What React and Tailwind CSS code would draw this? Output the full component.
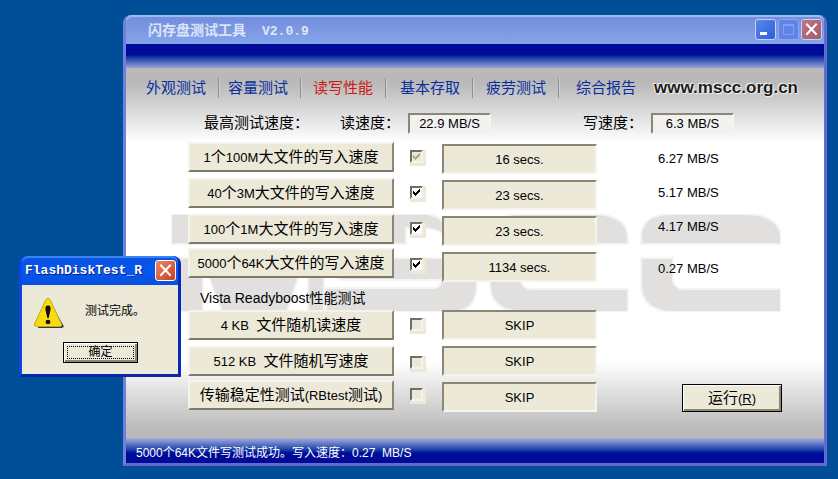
import React from "react";

const SANS = "font-['Liberation_Sans','Noto_Sans_CJK_SC',sans-serif]";
const MONO = "font-['Liberation_Mono','Noto_Sans_CJK_SC',monospace]";
const SUNKEN =
  "border-2 border-t-[#8a8777] border-l-[#8a8777] border-r-[#f6f4ea] border-b-[#f6f4ea]";
const RAISED =
  "border-2 border-t-[#f6f4ea] border-l-[#f6f4ea] border-r-[#8a8777] border-b-[#7d7a6c]";

const TABS = ["外观测试", "容量测试", "读写性能", "基本存取", "疲劳测试", "综合报告"];

const WRITE_TESTS = [
  { label: "1个100M大文件的写入速度", result: "16 secs.", checked: true, disabled: true },
  { label: "40个3M大文件的写入速度", result: "23 secs.", checked: true },
  { label: "100个1M大文件的写入速度", result: "23 secs.", checked: true },
  { label: "5000个64K大文件的写入速度", result: "1134 secs.", checked: true },
];

const BOOST_TESTS = [
  { label: "4 KB  文件随机读速度", result: "SKIP", checked: false },
  { label: "512 KB  文件随机写速度", result: "SKIP", checked: false },
  { label: "传输稳定性测试(RBtest测试)", result: "SKIP", checked: false },
];

const SPEEDS = ["6.27 MB/S", "5.17 MB/S", "4.17 MB/S", "0.27 MB/S"];

// Latin runs are set smaller than the Chinese text around them.
function Mixed({ text }) {
  return text.split(/([\x20-\x7e]+)/).map((part, i) =>
    /^[\x20-\x7e]+$/.test(part) ? (
      <span key={i} className="text-[13px]">{part}</span>
    ) : (
      part
    )
  );
}

function TestButton({ label }) {
  return (
    <button
      type="button"
      className={`h-[30px] w-full whitespace-pre bg-[#ece9d8] text-[15px] leading-[24px] text-black ${RAISED}`}
    >
      <Mixed text={label} />
    </button>
  );
}

function Check({ test }) {
  return (
    <label className="relative block size-4 bg-[#ece9d8]">
      <input
        type="checkbox"
        aria-label={test.label}
        defaultChecked={test.checked}
        disabled={test.disabled}
        className={`peer block size-[13px] appearance-none border-2 border-t-[#716f64] border-l-[#716f64] border-r-[#f6f4ea] border-b-[#f6f4ea] ${
          test.checked && !test.disabled ? "bg-white" : "bg-[#ece9d8]"
        }`}
      />
      <svg
        viewBox="0 0 7 7"
        shapeRendering="crispEdges"
        className={`pointer-events-none absolute left-[3px] top-[3px] hidden size-[7px] peer-checked:block ${
          test.disabled ? "fill-[#aca899]" : "fill-black"
        }`}
      >
        <path d="M0 2h1v1h1v1h1v-1h1v-1h1v-1h1v-1h1v3h-1v1h-1v1h-1v1h-1v1h-1v-1h-1v-1h-1z" />
      </svg>
    </label>
  );
}

function Result({ test }) {
  return (
    <input
      readOnly
      aria-label={`${test.label} 结果`}
      defaultValue={test.result}
      className={`block h-[30px] w-full bg-[#ece9d8] text-center text-[13px] text-black ${SUNKEN}`}
    />
  );
}

function Speed({ label, value }) {
  return (
    <label className="flex items-center">
      <span className="w-[68px] whitespace-nowrap text-[15px]">{label}</span>
      <input
        readOnly
        defaultValue={value}
        className={`h-[21px] w-[83px] bg-[#f1f1f0] text-center text-[13px] ${SUNKEN}`}
      />
    </label>
  );
}

function Watermark() {
  return (
    <svg
      viewBox="0 0 610 98"
      className="absolute left-[45px] top-[146px] h-[98px] w-[610px] fill-[#e1e0df] stroke-[#f4f4f4] stroke-2"
    >
      <path d="M0 0H90Q115 0 122 12L124 0H150L152 14Q156 0 185 0H255Q274 2 275 17V23Q270 15 250 14H235V30H0Z" />
      <path d="M0 44H32V98H0Z M34 44L38 64L51 98H116L127 64L132 44Z M137 44H153V98H137Z" />
      <path d="M155 44H284Q306 46 306 70Q306 98 280 98H155V74H260Q270 75 270 66H170Q155 62 155 44Z" />
      <path d="M319 30V20Q322 0 350 0H425Q457 2 457 24V30Z" />
      <path d="M319 44H350V66Q351 75 361 75H457V98H350Q319 96 319 70Z" />
      <path d="M470 30V20Q473 0 500 0H578Q609 2 610 24V30Z" />
      <path d="M470 44H502V66Q503 75 513 75H610V98H500Q470 96 470 70Z" />
    </svg>
  );
}

function CloseIcon() {
  return (
    <svg viewBox="0 0 19 19" className="size-full fill-none stroke-white stroke-2">
      <path d="M5 4.500 14 14M14 4.500 5 14" strokeLinecap="square" />
    </svg>
  );
}

function WindowControls() {
  const base = "size-[21px] rounded-[3px] border border-[#c4d2f5]";
  return (
    <div className="flex gap-[2px]">
      <button type="button" aria-label="最小化" className={`${base} bg-linear-to-br from-[#5a85ea] to-[#2f5fdc]`}>
        <svg viewBox="0 0 19 19" className="size-full fill-white">
          <path d="M4 12h7v3h-7z" />
        </svg>
      </button>
      <button type="button" disabled aria-label="最大化" className="size-[21px] rounded-[3px] border border-[#8ea6ea] bg-[#5f83e6]">
        <svg viewBox="0 0 19 19" className="size-full fill-none stroke-[#86a1ef]">
          <path d="M4.500 4.500h10v10h-10zM4 5.500h11" />
        </svg>
      </button>
      <button type="button" aria-label="关闭" className={`${base} bg-linear-to-br from-[#bd7482] to-[#a85a69]`}>
        <CloseIcon />
      </button>
    </div>
  );
}

function MainWindow() {
  return (
    <main className="absolute left-[123px] right-[11px] top-[15px] rounded-t-lg border-x-[3px] border-b-[3px] border-[#6f80dc] border-r-[#6468cf] border-b-[#6468cf] bg-[#7b96df]">
      <header className="flex h-[29px] items-center justify-between rounded-t-md bg-linear-to-b from-[#6e8be0] from-0% via-[#7994de] via-35% to-[#85a5ea] pl-[22px] pr-[2px] shadow-[inset_0_2px_1px_#a3bdf2]">
        <h1 className={`flex gap-4 whitespace-nowrap pt-1 text-[14px] font-bold text-[#dbe5fa] ${MONO}`}>
          <span>闪存盘测试工具</span>
          <span className="text-[13px] leading-[21px]">V2.0.9</span>
        </h1>
        <WindowControls />
      </header>
      <div className="h-6 bg-linear-to-b from-[#000c98] from-45% to-[#9a9fd6]" />

      <div className="relative bg-linear-to-b from-[#b9b9b9] from-4% via-white via-20% to-white to-80%">
        <div className="absolute inset-x-0 bottom-0 h-[76px] bg-linear-to-b from-white to-[#b9b9b9] to-90%" />
        <Watermark />
        <div className="relative">
          <nav className="flex h-10 items-center justify-between pl-[20px] pr-[26px]">
            <ul className="grid grid-cols-[82px_85px_87px_86px_90px_60px]">
              {TABS.map((tab, i) => (
                <li key={tab} className="flex items-center gap-3">
                  <a
                    href="#"
                    aria-current={tab === "读写性能" ? "page" : undefined}
                    className={`whitespace-nowrap text-[15px] ${tab === "读写性能" ? "text-[#d01a10]" : "text-[#0a2d9c]"}`}
                  >
                    {tab}
                  </a>
                  {i < TABS.length - 1 && (
                    <span className="h-5 w-[2px] border-l border-[#8f8f8f] bg-[#d0d0d0]" />
                  )}
                </li>
              ))}
            </ul>
            <a
              href="#"
              className="text-[17px] font-bold text-[#1c1c1c] [text-shadow:0_0_2px_#fff,1px_1px_1px_#eee,-1px_-1px_1px_#eee]"
            >
              www.mscc.org.cn
            </a>
          </nav>

          <div className="flex h-[30px] items-center pl-[78px]">
            <span className="w-[136px] whitespace-nowrap text-[15px]">最高测试速度：</span>
            <Speed label="读速度：" value="22.9 MB/S" />
            <div className="w-[92px]" />
            <Speed label="写速度：" value="6.3 MB/S" />
          </div>

          <div className="flex pb-[26px] pl-[62px] pt-1">
            <div className="grid w-[206px] grid-rows-[36px_36px_34px_62px_36px_34px_30px]">
              {WRITE_TESTS.slice(0, 3).map((t) => (
                <TestButton key={t.label} label={t.label} />
              ))}
              <div>
                <TestButton label={WRITE_TESTS[3].label} />
                <h2 className="whitespace-nowrap pl-3 pt-2 text-[14px] leading-[24px]">
                  Vista Readyboost性能测试
                </h2>
              </div>
              {BOOST_TESTS.map((t) => (
                <TestButton key={t.label} label={t.label} />
              ))}
            </div>
            <div className="ml-4 grid w-4 grid-rows-[36px_36px_36px_60px_38px_32px_24px] pt-2">
              {[...WRITE_TESTS, ...BOOST_TESTS].map((t) => (
                <Check key={t.label} test={t} />
              ))}
            </div>
            <div className="ml-4 grid w-[155px] grid-rows-[36px_36px_36px_58px_36px_36px_30px] pt-[2px]">
              {[...WRITE_TESTS, ...BOOST_TESTS].map((t) => (
                <Result key={t.label} test={t} />
              ))}
            </div>
            <div className="ml-[61px] flex flex-col justify-between">
              <ul className="grid grid-rows-[34px_34px_34px_50px] items-center text-[13px]">
                {SPEEDS.map((s) => (
                  <li key={s}>{s}</li>
                ))}
              </ul>
              <button
                type="button"
                className="ml-6 h-[28px] w-[100px] border border-black bg-[#ece9d8] text-[15px] leading-[22px] shadow-[inset_1px_1px_0_#fff,inset_-2px_-2px_0_#8a8777]"
              >
                运行<span className="text-[13px]">(<u>R</u>)</span>
              </button>
            </div>
          </div>
        </div>
      </div>

      <footer className="flex h-[25px] items-center whitespace-pre bg-linear-to-b from-[#a9aedd] to-[#000c98] to-60% pl-[10px] pt-1 text-[12px] text-white">
        5000个64K文件写测试成功。写入速度：0.27  MB/S
      </footer>
    </main>
  );
}

function WarningIcon() {
  return (
    <svg viewBox="0 0 32 32" className="size-8">
      <path d="M16 3 31 29.500 29 31H5z" fill="#2a3564" />
      <path d="M15 1.500Q13.500 1.500 12.500 3.500L1.500 27Q1 29.500 3.500 29.500H27Q29.500 29.500 28.500 27L17.500 3.500Q16.500 1.500 15 1.500Z" fill="#f8dc10" stroke="#c9a60c" />
      <path d="M15 8.500C12.500 8.500 12 10.500 12.500 13L14.300 21H15.700L17.500 13C18 10.500 17.500 8.500 15 8.500Z" fill="#111" />
      <ellipse cx="15" cy="25" rx="2.500" ry="2.200" fill="#111" />
    </svg>
  );
}

function Dialog() {
  return (
    <section
      role="dialog"
      aria-labelledby="dialog-title"
      className="absolute left-[19px] top-[256px] w-[162px] rounded-t-lg border-x-[3px] border-b-[3px] border-l-[#0a46e8] border-r-[#0828b8] border-b-[#0828a8] bg-[#0a4fe8]"
    >
      <header className="flex h-[29px] items-center justify-between rounded-t-md bg-linear-to-b from-[#0a50e0] via-[#0458ee] via-50% to-[#0650e0] pl-[3px] pr-[2px] shadow-[inset_0_2px_1px_#3a86f8]">
        <h2
          id="dialog-title"
          className={`text-[13px] font-bold text-white [text-shadow:1px_1px_0_#0a1883] ${MONO}`}
        >
          FlashDiskTest_R
        </h2>
        <button type="button" aria-label="关闭" className="size-[21px] shrink-0 rounded-[3px] border border-white bg-linear-to-br from-[#e8886a] to-[#cc3a14]">
          <CloseIcon />
        </button>
      </header>
      <div className="bg-[#ece9d8] pb-[11px] pt-[12px]">
        <div className="flex items-start gap-5 pl-[11px]">
          <WarningIcon />
          <p className="whitespace-nowrap pt-1 text-[12px] leading-[20px]">测试完成。</p>
        </div>
        <button
          type="button"
          className="ml-[41px] mt-[13px] block h-[21px] w-[75px] border border-black bg-[#ece9d8] p-[3px] shadow-[inset_1px_1px_0_#fff,inset_-2px_-2px_0_#8a8777]"
        >
          <span className="block h-[13px] border border-dotted border-black text-[12px] leading-[11px]">确定</span>
        </button>
      </div>
    </section>
  );
}

export default function App() {
  return (
    <div className={`relative min-h-screen overflow-hidden bg-[#004e98] text-black ${SANS}`}>
      <MainWindow />
      <Dialog />
    </div>
  );
}
